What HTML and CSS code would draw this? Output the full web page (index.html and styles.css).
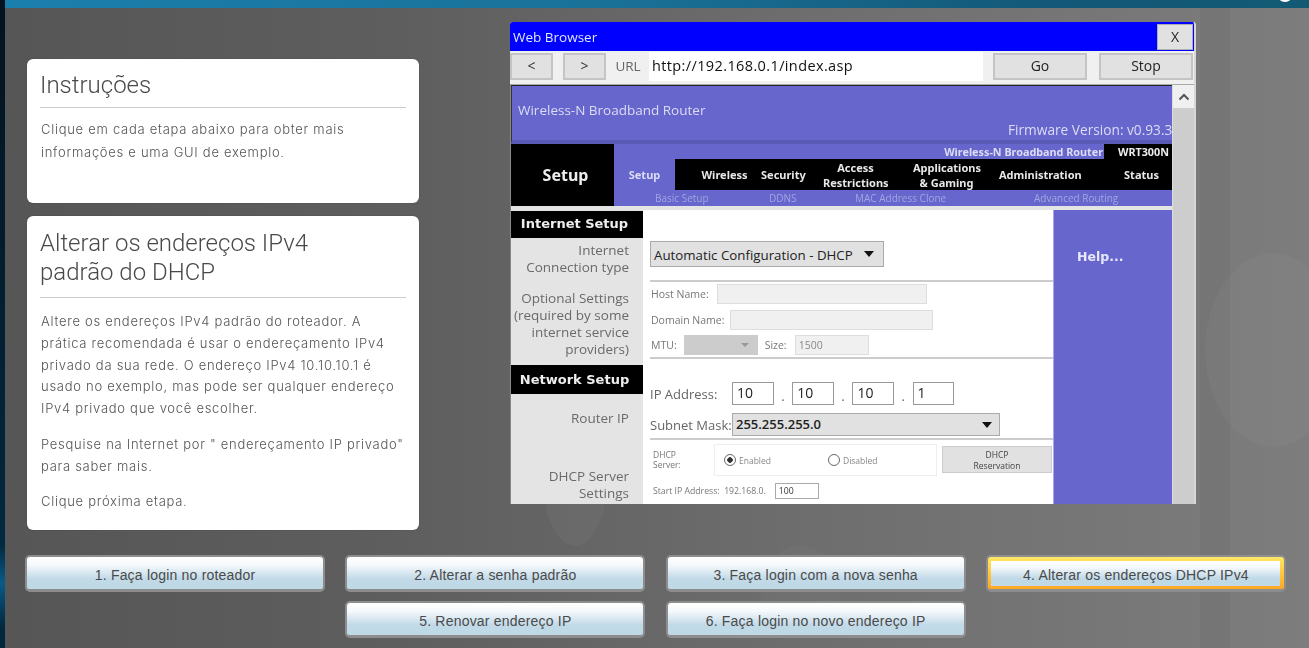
FILE: index.html
```html
<!DOCTYPE html>
<html lang="pt-BR">
<head>
  <meta charset="UTF-8" />
  <meta name="viewport" content="width=device-width, initial-scale=1" />
  <title>Alterar os endereços IPv4 padrão do DHCP</title>
  <link rel="stylesheet" href="styles.css">
</head>
<body>
  <div class="side-strip"></div>
  <div class="main">
    <div class="top-bar"><span class="top-dot"></span></div>

    <div class="content">
      <div class="text-col">
        <section class="card card-intro">
          <h2>Instruções</h2>
          <p>Clique em cada etapa abaixo para obter mais informações e uma GUI de exemplo.</p>
        </section>
        <section class="card card-step">
          <h2>Alterar os endereços IPv4<br>padrão do DHCP</h2>
          <p>Altere os endereços IPv4 padrão do roteador. A prática recomendada é usar o endereçamento IPv4 privado da sua rede. O endereço IPv4 10.10.10.1 é usado no exemplo, mas pode ser qualquer endereço IPv4 privado que você escolher.</p>
          <p>Pesquise na Internet por " endereçamento IP privado" para saber mais.</p>
          <p>Clique próxima etapa.</p>
        </section>
      </div>

      <div class="browser">
        <div class="title-bar">
          <span>Web Browser</span>
          <div class="btn-close">X</div>
        </div>
        <div class="tool-bar">
          <div class="btn btn-nav">&lt;</div>
          <div class="btn btn-nav">&gt;</div>
          <span class="url-label">URL</span>
          <div class="url-box">http://192.168.0.1/index.asp</div>
          <div class="btn btn-go">Go</div>
          <div class="btn btn-go">Stop</div>
        </div>

        <div class="viewport">
          <div class="page">
            <div class="router-head">
              <div>Wireless-N Broadband Router</div>
              <div class="firmware">Firmware Version: v0.93.3</div>
            </div>

            <div class="router-nav">
              <div class="nav-title">Setup</div>
              <div class="nav-right">
                <div class="nav-model">
                  <span class="model-name">Wireless-N Broadband Router</span>
                  <span class="model-code">WRT300N</span>
                </div>
                <div class="nav-tabs">
                  <span class="tab-active">Setup</span>
                  <div class="tabs-black">
                    <span class="tab t-wireless">Wireless</span>
                    <span class="tab t-security">Security</span>
                    <span class="tab t-access">Access<br>Restrictions</span>
                    <span class="tab t-apps">Applications<br>&amp; Gaming</span>
                    <span class="tab t-admin">Administration</span>
                    <span class="tab t-status">Status</span>
                  </div>
                </div>
                <div class="nav-sub">
                  <span class="s-basic">Basic Setup</span>
                  <span class="s-ddns">DDNS</span>
                  <span class="s-mac">MAC Address Clone</span>
                  <span class="s-adv">Advanced Routing</span>
                </div>
              </div>
            </div>

            <div class="router-body">
              <div class="labels">
                <div class="label-head">Internet Setup</div>
                <div class="label-text l-conn">Internet<br>Connection type</div>
                <div class="label-text l-opt">Optional Settings<br>(required by some<br>internet service<br>providers)</div>
                <div class="label-head label-head-net">Network Setup</div>
                <div class="label-text l-router">Router IP</div>
                <div class="label-text l-dhcp">DHCP Server<br>Settings</div>
              </div>

              <div class="form">
                <div class="select select-conn">Automatic Configuration - DHCP<i class="arrow"></i></div>
                <div class="form-group group-opt">
                  <div class="small-row"><span>Host Name:</span><div class="field f-host"></div></div>
                  <div class="small-row"><span>Domain Name:</span><div class="field f-domain"></div></div>
                  <div class="small-row">
                    <span>MTU:</span>
                    <div class="select-off"><i class="arrow arrow-off"></i></div>
                    <span>Size:</span>
                    <div class="field f-size">1500</div>
                  </div>
                </div>
                <div class="form-group group-net">
                  <div class="ip-row">
                    <span class="ip-label">IP Address:</span>
                    <div class="octet">10</div><span class="dot">.</span>
                    <div class="octet">10</div><span class="dot">.</span>
                    <div class="octet">10</div><span class="dot">.</span>
                    <div class="octet">1</div>
                  </div>
                  <div class="ip-row mask-row">
                    <span class="ip-label">Subnet Mask:</span>
                    <div class="select select-mask">255.255.255.0<i class="arrow"></i></div>
                  </div>
                </div>
                <div class="form-group group-dhcp">
                  <div class="dhcp-row">
                    <span class="dhcp-label">DHCP<br>Server:</span>
                    <div class="dhcp-box">
                      <span class="radio radio-on"></span><span class="radio-text r-enabled">Enabled</span>
                      <span class="radio"></span><span class="radio-text">Disabled</span>
                    </div>
                    <div class="btn-reserve">DHCP<br>Reservation</div>
                  </div>
                  <div class="start-row">Start IP Address:&nbsp; 192.168.0.<div class="start-input">100</div></div>
                </div>
              </div>

              <div class="help">Help...</div>
            </div>
          </div>
          <div class="scroll"><div class="scroll-up"><svg width="12" height="8" viewBox="0 0 12 8"><path d="M1.500 6.500 6 2l4.500 4.500" fill="none" stroke="#555" stroke-width="2"/></svg></div></div>
        </div>
      </div>
    </div>

    <div class="steps">
      <button class="step">1. Faça login no roteador</button>
      <button class="step">2. Alterar a senha padrão</button>
      <button class="step">3. Faça login com a nova senha</button>
      <button class="step step-current">4. Alterar os endereços DHCP IPv4</button>
      <button class="step">5. Renovar endereço IP</button>
      <button class="step">6. Faça login no novo endereço IP</button>
    </div>
  </div>
</body>
</html>
```

FILE: styles.css
```css
* {
  box-sizing: border-box;
  margin: 0;
  padding: 0;
}

html, body {
  height: 100%;
  overflow: hidden;
}

body {
  display: flex;
  background: #333;
  font-family: "Liberation Sans", Arial, sans-serif;
}

.side-strip {
  width: 5px;
  flex: none;
  background: linear-gradient(180deg, #04121f 0%, #02283f 84%, #0a5a88 90%, #02263c 97%);
}

.main {
  flex: 1;
  min-width: 0;
  display: flex;
  flex-direction: column;
  background:
    radial-gradient(ellipse 68px 97px at 1268px 350px, rgba(255,255,255,.028) 0 99%, transparent 100%),
    radial-gradient(ellipse 32px 66px at 570px 480px, rgba(255,255,255,.03) 0 99%, transparent 100%),
    radial-gradient(ellipse 40px 44px at 795px 590px, rgba(255,255,255,.02) 0 99%, transparent 100%),
    linear-gradient(90deg, rgba(0,0,0,0) 0 1195px, rgba(0,0,0,.04) 1195px 1225px, rgba(0,0,0,0) 1225px),
    linear-gradient(90deg, #565656 0%, #5e5e5e 30%, #6e6e6e 62%, #7d7d7d 100%);
}

.top-bar {
  height: 8px;
  flex: none;
  overflow: hidden;
  position: relative;
  background: linear-gradient(90deg, #1b7fad 0%, #1a7299 45%, #135878 80%, #125a74 100%);
}

.top-dot {
  position: absolute;
  left: 1272px;
  top: -14px;
  width: 16px;
  height: 16px;
  border-radius: 50%;
  background: #fff;
}

.content {
  display: flex;
  align-items: flex-start;
  height: 496px;
  flex: none;
}

/* Cards */
.text-col {
  width: 392px;
  margin: 51px 0 0 22px;
  flex: none;
  filter: blur(.3px);
}

.card {
  background: #fff;
  border-radius: 6px;
  padding: 12px 13px 0;
  color: #555;
  font-family: Inter, "Liberation Sans", sans-serif;
  box-shadow: 0 0 1px rgba(0,0,0,.5);
}

.card-intro {
  height: 144px;
  margin-bottom: 13px;
}

.card-step {
  height: 314px;
  padding-top: 13px;
}

.card h2 {
  font-family: Roboto, "Liberation Sans", sans-serif;
  font-size: 24px;
  font-weight: 300;
  line-height: 29px;
  color: #48494b;
  border-bottom: 1px solid #ccc;
  padding-bottom: 7px;
  margin-bottom: 10px;
}

.card-step h2 {
  padding-bottom: 10px;
  margin-bottom: 13px;
}

.card p {
  font-size: 13px;
  font-weight: 300;
  letter-spacing: .72px;
  line-height: 21.750px;
  margin: 0 0 14px 1px;
}

.card-intro p {
  line-height: 23px;
}

/* Browser window */
.browser {
  width: 686px;
  height: 482px;
  margin: 14px 0 0 91px;
  flex: none;
  background: #f0f0f0;
  font-family: "Open Sans", "Noto Sans", sans-serif;
  color: #222;
  display: flex;
  flex-direction: column;
  overflow: hidden;
  border-radius: 3px 3px 0 0;
  border-right: 2px solid #d8d8d8;
  filter: blur(.35px);
}

.title-bar {
  height: 29px;
  flex: none;
  background: #0000ff;
  color: #dfe6ff;
  font-size: 13.500px;
  padding-left: 3px;
  display: flex;
  justify-content: space-between;
  align-items: center;
}

.btn-close {
  width: 36px;
  height: 26px;
  margin-right: 1px;
  background: #e1e1e1;
  border: 1px solid #adadad;
  color: #222;
  text-align: center;
  line-height: 24px;
  font-size: 14px;
}

.tool-bar {
  height: 33px;
  flex: none;
  display: flex;
  align-items: flex-start;
  padding-top: 1px;
}

.tool-bar > * {
  flex: none;
}

.btn {
  background: #e1e1e1;
  border: 2px solid #c4c4c4;
  height: 27px;
  margin-top: 1px;
  text-align: center;
  line-height: 22px;
  font-size: 14px;
}

.btn-nav {
  width: 43px;
  margin-right: 10px;
  color: #333;
}

.url-label {
  color: #666;
  font-size: 13.500px;
  line-height: 28px;
  margin-left: -6px;
  width: 36px;
  margin-right: 3px;
  text-align: center;
}

.url-box {
  width: 334px;
  height: 29px;
  background: #fff;
  color: #111;
  font-size: 14.500px;
  letter-spacing: .38px;
  line-height: 28px;
  padding-left: 3px;
  margin-right: 10px;
}

.btn-go {
  width: 94px;
  margin-right: 12px;
}

.viewport {
  flex: 1;
  min-height: 0;
  display: flex;
  border-top: 1px solid #aaa;
  border-left: 1px solid #888;
}

.page {
  width: 661px;
  flex: none;
  overflow: hidden;
  background: #e4e4e4;
}

.scroll {
  flex: 1;
  background: #cdcdcd;
  border-left: 1px solid #ddd;
}

.scroll-up {
  height: 23px;
  background: #f0f0f0;
  display: flex;
  align-items: center;
  justify-content: center;
}

/* Router page */
.router-head {
  height: 59px;
  background: #6666cc;
  border-top: 1px solid #222;
  border-left: 1px solid #333;
  border-bottom: 4px solid #5a5ab4;
  color: #dcdcf6;
  font-size: 13.500px;
  padding: 15px 0 0 6px;
  white-space: nowrap;
  overflow: hidden;
}

.firmware {
  font-size: 13.700px;
  margin: 2px 0 0 490px;
  line-height: 18px;
}

.router-nav {
  display: flex;
  height: 62px;
  background: #6666cc;
  font-family: "Noto Sans", sans-serif;
  font-weight: bold;
  color: #dcdcf6;
}

.nav-title {
  width: 103px;
  background: #000;
  color: #eee;
  font-size: 16px;
  text-align: center;
  line-height: 62px;
  padding-left: 6px;
}

.nav-right {
  flex: 1;
  min-width: 0;
  display: flex;
  flex-direction: column;
}

.nav-model {
  height: 15px;
  display: flex;
  justify-content: flex-end;
  font-size: 10.800px;
  line-height: 15px;
}

.model-name {
  color: #dcdcf6;
  padding-right: 1px;
  white-space: nowrap;
}

.model-code {
  width: 68px;
  background: #000;
  color: #eee;
  text-align: right;
  padding-right: 3px;
}

.nav-tabs {
  height: 31px;
  display: flex;
}

.tab-active {
  width: 61px;
  flex: none;
  font-size: 11px;
  text-align: center;
  line-height: 32px;
}

.tabs-black {
  flex: 1;
  background: #000;
  color: #e8e8e8;
  display: flex;
  align-items: center;
  font-size: 11px;
  line-height: 15px;
  text-align: center;
}

.tab {
  flex: none;
  white-space: nowrap;
}

.t-wireless { margin-left: 24px; width: 51px; }
.t-security { margin-left: 11px; width: 44px; }
.t-access { margin-left: 18px; width: 65px; }
.t-apps { margin-left: 25px; width: 67px; }
.t-admin { margin-left: 19px; width: 81px; }
.t-status { margin-left: 43px; width: 37px; }

.nav-sub {
  font-family: "Open Sans", sans-serif;
  font-weight: normal;
  font-size: 10px;
  color: #a4a4e2;
  line-height: 16px;
  display: flex;
  white-space: nowrap;
}

.s-basic { margin-left: 41px; width: 54px; }
.s-ddns { margin-left: 60px; width: 29px; }
.s-mac { margin-left: 57px; width: 90px; }
.s-adv { margin-left: 89px; }

.router-body {
  display: flex;
  height: 294px;
  margin-top: 4px;
}

.labels {
  width: 132px;
  flex: none;
  font-family: "Open Sans", sans-serif;
}

.label-head {
  height: 27px;
  margin-top: 1px;
  background: #000;
  color: #eee;
  font-family: "DejaVu Sans", sans-serif;
  font-weight: bold;
  font-size: 13px;
  line-height: 25px;
  text-align: center;
  padding-right: 5px;
}

.label-head-net {
  height: 29px;
  margin-top: 7px;
  line-height: 29px;
}

.label-text {
  text-align: right;
  color: #6a6a6a;
  font-size: 13.500px;
  line-height: 17px;
  padding-right: 14px;
}

.l-conn { margin-top: 4px; }
.l-opt { margin-top: 14px; }
.l-router { margin-top: 16px; }
.l-dhcp { margin-top: 41px; }

.form {
  width: 410px;
  flex: none;
  background: #fff;
  padding-left: 7px;
  color: #222;
}

.select {
  background: #e1e1e1;
  border: 1px solid #aaa;
  position: relative;
  color: #222;
}

.select-conn {
  width: 234px;
  height: 26px;
  margin-top: 31px;
  font-size: 13.300px;
  line-height: 26px;
  padding-left: 3px;
}

.arrow {
  position: absolute;
  right: 9px;
  top: 9px;
  width: 0;
  height: 0;
  border: 5px solid transparent;
  border-top: 6px solid #111;
  border-bottom: 0;
}

.form-group {
  border-top: 2px solid #ccc;
}

.group-opt {
  height: 77px;
  margin-top: 13px;
  padding-top: 2px;
}

.small-row {
  display: flex;
  align-items: center;
  height: 20px;
  margin-bottom: 5.500px;
  font-size: 10.500px;
  color: #777;
  gap: 5px;
  padding-left: 1px;
}

.field {
  height: 20px;
  background: #f0f0f0;
  border: 1px solid #ddd;
  font-size: 10.500px;
  line-height: 18px;
  padding-left: 3px;
  color: #888;
}

.f-host { width: 210px; margin-left: 3px; }
.f-domain { width: 203px; margin-left: 1px; }
.f-size { width: 74px; margin-left: 3px; }

.select-off {
  width: 74px;
  height: 20px;
  background: #ccc;
  position: relative;
  margin: 0 2px;
}

.arrow-off {
  right: 9px;
  top: 8px;
  border-width: 4px;
  border-top: 4px solid #999;
}

.group-net {
  height: 81px;
  padding-top: 23px;
}

.ip-row {
  display: flex;
  align-items: center;
  height: 23px;
  font-size: 13px;
  color: #666;
}

.ip-label {
  width: 82px;
  flex: none;
}

.octet {
  width: 41.500px;
  height: 23px;
  border: 1px solid #999;
  background: #fff;
  color: #222;
  font-size: 14px;
  line-height: 20px;
  padding-left: 4px;
}

.dot {
  width: 18.700px;
  text-align: center;
  padding-top: 5px;
}

.mask-row {
  margin-top: 8px;
}

.select-mask {
  width: 268px;
  height: 23px;
  font-size: 13px;
  font-weight: 600;
  line-height: 21px;
  padding-left: 3px;
}

.select-mask .arrow {
  top: 8px;
  right: 7px;
}

.group-dhcp {
  padding-top: 4px;
}

.dhcp-row {
  display: flex;
  align-items: flex-start;
}

.dhcp-label {
  width: 64px;
  flex: none;
  padding: 6px 0 0 3px;
  font-size: 8.500px;
  line-height: 10px;
  color: #777;
}

.dhcp-box {
  width: 223px;
  height: 32px;
  border: 1px solid #eee;
  display: flex;
  align-items: center;
  font-size: 8.500px;
  color: #888;
}

.radio {
  width: 12px;
  height: 12px;
  border: 1px solid #666;
  border-radius: 50%;
  margin-left: 9px;
  margin-right: 3px;
  background: #fff;
  flex: none;
}

.radio-on {
  background: radial-gradient(circle, #333 0 2.500px, #fff 3px);
}

.r-enabled {
  width: 80px;
}

.btn-reserve {
  width: 110px;
  height: 27px;
  margin: 2px 0 0 5px;
  background: #e1e1e1;
  border: 1px solid #ccc;
  font-size: 8.500px;
  line-height: 11px;
  text-align: center;
  color: #444;
  padding-top: 2px;
}

.start-row {
  display: flex;
  align-items: center;
  font-size: 8.700px;
  color: #777;
  padding-left: 3px;
  margin-top: 7px;
  white-space: nowrap;
}

.start-input {
  width: 44px;
  height: 16px;
  border: 1px solid #aaa;
  background: #fff;
  color: #333;
  margin-left: 9px;
  padding-left: 3px;
  line-height: 14px;
}

.help {
  flex: 1;
  background: #6666cc;
  border-left: 1px solid #a8a8ec;
  color: #e8e8fa;
  font-family: "DejaVu Sans", sans-serif;
  font-weight: bold;
  font-size: 12.500px;
  padding: 39px 0 0 23px;
}

/* Step buttons */
.steps {
  display: flex;
  flex-wrap: wrap;
  justify-content: center;
  column-gap: 20.300px;
  row-gap: 9px;
  width: 1261px;
  margin: 51px 0 0 20px;
}

.step {
  width: 300px;
  height: 37px;
  padding-top: 3px;
  border: 2px solid #8d8d8d;
  border-bottom-width: 3px;
  border-radius: 5px;
  background: linear-gradient(180deg, #ffffff 0%, #f5f9fb 25%, #c2dae8 68%, #bed8e6 100%);
  font-family: "Liberation Sans", Arial, sans-serif;
  font-size: 14px;
  letter-spacing: .2px;
  color: #4a4a4a;
}

.step-current {
  background:
    linear-gradient(180deg, #ffffff 0%, #f5f9fb 25%, #c2dae8 68%, #bed8e6 100%) center / calc(100% - 7px) calc(100% - 7px) no-repeat,
    linear-gradient(180deg, #ffe766 0%, #ffc83d 50%, #ffa726 100%);
}
```
